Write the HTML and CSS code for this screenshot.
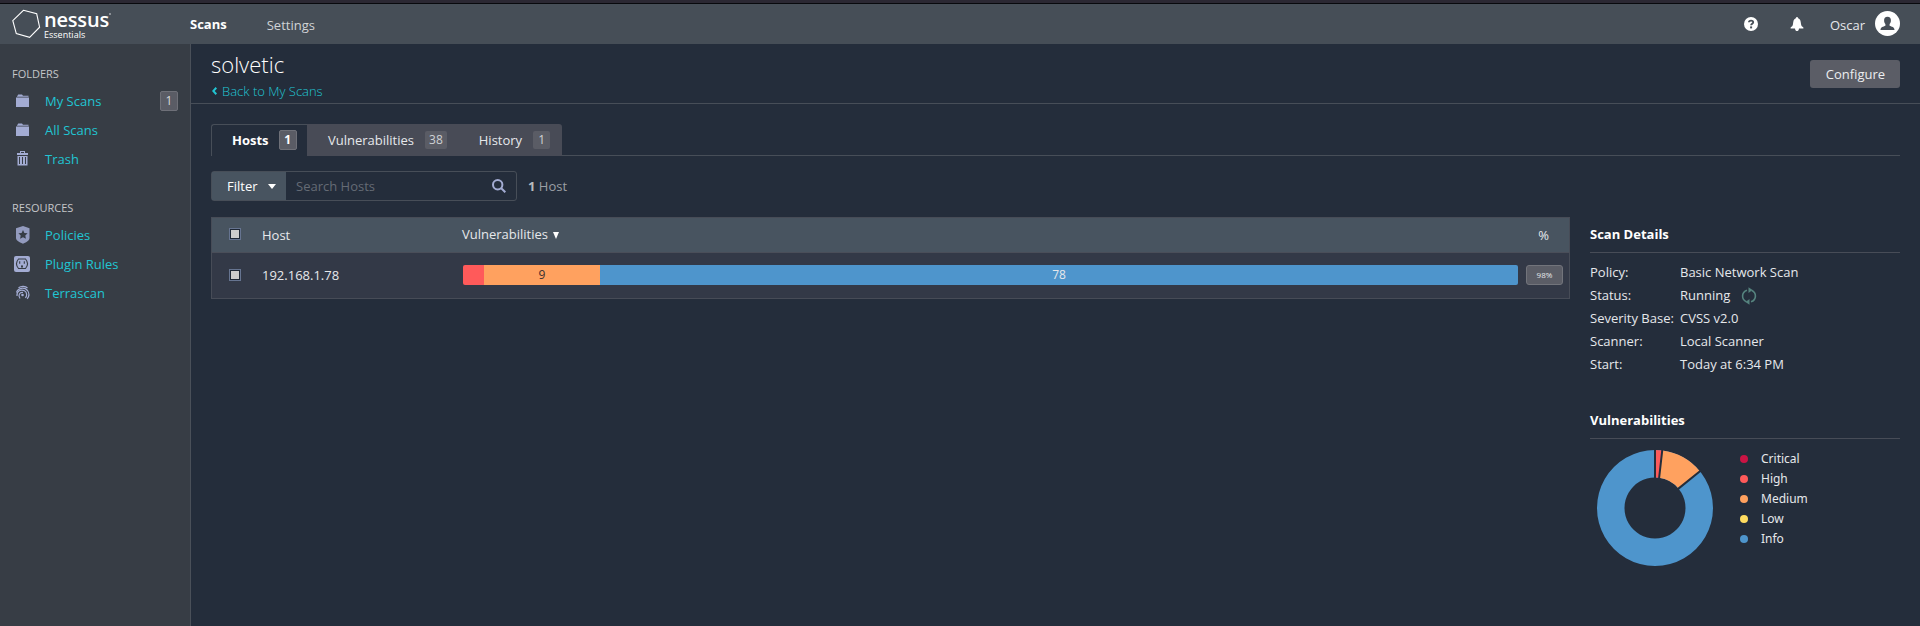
FILE: index.html
```html
<!DOCTYPE html>
<html lang="en">
<head>
<meta charset="utf-8">
<title>Nessus Essentials / solvetic</title>
<link rel="stylesheet" href="styles.css">
</head>
<body>
<header class="topbar">
  <div class="logo">
    <svg class="logo-mark" width="30" height="30" viewBox="0 0 30 30"><path d="M11.400 1.300 24.700 4.800 27.600 18.200 17.600 28.300 4.300 24.600.8 11.600Z"/></svg>
    <div class="logo-text"><span class="logo-name">nessus<i class="logo-dot"></i></span><span class="logo-sub">Essentials</span></div>
  </div>
  <nav class="topnav"><a class="nav-active">Scans</a><a class="nav-item">Settings</a></nav>
  <div class="account">
    <svg class="help" width="14" height="14" viewBox="0 0 14 14"><circle cx="7" cy="7" r="7" fill="#fff"/><path d="M4.900 5.300C5 3.200 9.200 3 9.200 5.200c0 1.500-2.100 1.500-2.100 3.100" fill="none" stroke="#464e57" stroke-width="1.800"/><rect x="6.100" y="9.400" width="2" height="2" fill="#464e57"/></svg>
    <svg class="bell" width="14" height="14" viewBox="0 0 14 14"><path d="M7 0C8 0 8 1 8.200 1.300 10.600 2.200 10.700 4.500 11 7c.2 2 1.200 2.600 2.400 3.500v.9H9C8.800 13.200 8 14 7 14s-1.800-.8-2-2.600H.6v-.9C1.800 9.600 2.800 9 3 7c.3-2.500.4-4.800 2.800-5.700C6 1 6 0 7 0z" fill="#fff"/></svg>
    <span class="user">Oscar</span>
    <svg class="avatar" width="25" height="25" viewBox="0 0 25 25"><circle cx="12.500" cy="12.500" r="12.500" fill="#fff"/><path d="M12.500 5.800c2.300 0 3.600 1.500 3.400 3.900-.1 1.700-.7 2.600-1.300 3.400v1.600c2 1 4.900 1.200 4.900 4.300H5.500c0-3.100 2.900-3.300 4.900-4.300v-1.600c-.6-.8-1.200-1.700-1.300-3.400-.2-2.400 1.100-3.900 3.400-3.900z" fill="#464e57"/></svg>
  </div>
</header>
<div class="body">
  <aside class="sidebar">
    <h4 class="side-title">FOLDERS</h4>
    <a class="side-link"><svg class="side-icon" width="18" height="18" viewBox="0 0 18 18"><path d="M3 4.500 4.200 2.500H8l1 1.200h5.500v1H3zM2 5.500h13V15H2z"/></svg>My Scans<span class="count side-count">1</span></a>
    <a class="side-link"><svg class="side-icon" width="18" height="18" viewBox="0 0 18 18"><path d="M3 4.500 4.200 2.500H8l1 1.200h5.500v1H3zM2 5.500h13V15H2z"/></svg>All Scans</a>
    <a class="side-link"><svg class="side-icon" width="18" height="18" viewBox="0 0 18 18"><path fill-rule="evenodd" d="M3 3h3V1h5v2h3v2H3zM7 2v1h3V2zM3.500 6h10v9.500h-10zM5 7v7h1V7zm3 0v7h1V7zm3 0v7h1V7z"/></svg>Trash</a>
    <h4 class="side-title side-title-second">RESOURCES</h4>
    <a class="side-link"><svg class="side-icon" width="18" height="18" viewBox="0 0 18 18"><path d="M9 0 15.500 2.300V12c0 3-4 4.500-6.500 5.800C6.500 16.500 2 15 2 12V2.300z" opacity=".85"/><path class="cut" d="m9 4 1.400 2.900 3.200.4-2.300 2.200.6 3.200L9 11.200l-2.900 1.500.6-3.200-2.300-2.200 3.200-.4z"/></svg>Policies</a>
    <a class="side-link"><svg class="side-icon" width="18" height="18" viewBox="0 0 18 18"><rect x="0" y="1" width="16" height="16" rx="2"/><path class="line" d="M4.500 4h7c2.600 3 2.600 6.500 0 9.500h-7c-2.600-3-2.600-6.500 0-9.500zM5.700 6.200v2.600M10.300 6.200v2.600"/><path class="cut" d="M7 12.500v-1.200c0-1.400 2-1.400 2 0v1.200z"/></svg>Plugin Rules</a>
    <a class="side-link"><svg class="side-icon" width="18" height="18" viewBox="0 0 18 18"><g class="arc"><path d="M4.500 3.800C7.500 1.500 11.500 2 13.500 4"/><path d="M2.500 8.500C4 3.500 10.500 3 13.500 6.500c2 2.700 1.500 6-.3 8.300"/><path d="M3 12C2.500 7 7 5 10.500 6.800c3 1.800 2.500 5.500.8 7"/><path d="M6 14.500C3.500 11 6 8 9 8.500"/></g><circle cx="8.500" cy="11" r="1.300"/></svg>Terrascan</a>
  </aside>
  <main class="main">
    <div class="page-head">
      <div><h1 class="title">solvetic</h1>
      <a class="back"><svg width="5" height="8" viewBox="0 0 5 8"><path d="M4.300.8 1.300 4l3 3.200"/></svg>Back to My Scans</a></div>
      <button class="configure">Configure</button>
    </div>
    <div class="content">
      <div class="tabs">
        <div class="tab tab-active">Hosts<span class="count">1</span></div>
        <div class="tab-group"><div class="tab tab-vuln">Vulnerabilities<span class="tab-count">38</span></div><div class="tab tab-history">History<span class="tab-count">1</span></div></div>
      </div>
      <div class="filters">
        <div class="search"><div class="filter">Filter<i class="caret"></i></div><span class="placeholder">Search Hosts</span><svg class="glass" width="14" height="14" viewBox="0 0 14 14"><circle cx="5.700" cy="5.700" r="4.700"/><path d="m9 9 4.300 4.300"/></svg></div>
        <span class="total"><b>1</b> Host</span>
      </div>
      <div class="columns">
        <div class="table">
          <div class="row row-head"><i class="check"></i><span class="cell-host">Host</span><span class="cell-vuln">Vulnerabilities <i class="sort"></i></span><span class="cell-pct">%</span></div>
          <div class="row row-item"><i class="check"></i><span class="cell-host">192.168.1.78</span><div class="bar"><span class="seg high"></span><span class="seg medium">9</span><span class="seg info">78</span></div><span class="pct">98%</span></div>
        </div>
        <section class="details">
          <h2 class="section-title">Scan Details</h2>
          <dl class="facts">
            <dt>Policy:</dt><dd>Basic Network Scan</dd>
            <dt>Status:</dt><dd class="status">Running<svg width="16" height="18" viewBox="0 0 16 18"><path class="ring" d="M5.500 14.800C.2 12.500.2 5.200 6 3.200M10.500 3.200c5.300 2.300 5.300 9.600-.5 11.600"/><path class="tip" d="M7.500.3 11.500 3 7.500 6zM8.500 17.700 4.500 15l4-3z"/></svg></dd>
            <dt>Severity Base:</dt><dd>CVSS v2.0</dd>
            <dt>Scanner:</dt><dd>Local Scanner</dd>
            <dt>Start:</dt><dd>Today at 6:34 PM</dd>
          </dl>
          <h2 class="section-title">Vulnerabilities</h2>
          <div class="chart">
            <svg class="donut" width="118" height="118" viewBox="-59 -59 118 118">
              <path d="M0-58A58 58 0 1 1-.01-58V-30.500A30.500 30.500 0 1 0 0-30.500Z" fill="#4e95cc"/>
              <path d="M0-58A58 58 0 0 1 8.200-57.400L4.300-30.200A30.500 30.500 0 0 0 0-30.500Z" fill="#ff5a5a"/>
              <path d="M7.300-57.500A58 58 0 0 1 45-36.600L23.700-19.200A30.500 30.500 0 0 0 3.900-30.200Z" fill="#ffa15f"/>
              <path d="M0-29V-60M4-29 7.500-60M22.500-18.600 46.500-38" stroke="#242d3b" stroke-width="2"/>
            </svg>
            <ul class="legend"><li><i class="dot critical"></i>Critical</li><li><i class="dot high"></i>High</li><li><i class="dot medium"></i>Medium</li><li><i class="dot low"></i>Low</li><li><i class="dot info"></i>Info</li></ul>
          </div>
        </section>
      </div>
    </div>
  </main>
</div>
</body>
</html>
```
FILE: styles.css
```css
* { box-sizing: border-box; }
body { margin: 0; height: 626px; overflow: hidden; background: #242d3b; color: #e6e8eb; font: 13px/20px "Open Sans", "Noto Sans", sans-serif; display: flex; flex-direction: column; }
h1, h2, h4, dl, dd, ul { margin: 0; padding: 0; font-weight: 400; }
svg { display: block; flex: none; }

.topbar { height: 44px; flex: none; border-top: 3px solid #2b2833; background: linear-gradient(#08090d 1px, #464e57 1px); display: flex; align-items: flex-start; padding: 0 20px 0 12px; }
.logo { display: flex; width: 178px; padding-top: 6px; }
.logo-mark path { fill: none; stroke: #fff; stroke-width: 1.1; }
.logo-text { display: flex; flex-direction: column; margin-left: 2px; }
.logo-name { font-size: 20px; line-height: 21px; font-weight: 600; color: #fff; letter-spacing: -.2px; display: flex; }
.logo-dot { width: 2px; height: 2px; margin-top: 4px; background: #8b9096; }
.logo-sub { font-size: 9px; line-height: 10px; color: #fff; }
.topnav { display: flex; gap: 40px; flex: 1; padding-top: 11px; }
.nav-active { font-weight: 700; color: #fff; }
.nav-item { padding-top: 1px; color: #d0d3d6; }
.account { display: flex; }
.help { margin: 14px 32px 0 0; }
.bell { margin: 14px 26px 0 0; }
.user { padding-top: 12px; margin-right: 10px; }
.avatar { margin-top: 8px; }

.body { flex: 1; display: flex; min-height: 0; }
.sidebar { width: 191px; flex: none; background: #373d45; border-right: 1px solid #4a5059; padding: 20px 12px 0 12px; }
.side-title { font-size: 11px; line-height: 20px; height: 22px; color: #c4c6c9; }
.side-title-second { margin-top: 25px; height: 22px; }
.side-link { display: flex; align-items: center; height: 29px; color: #21c5d3; }
.side-icon { margin: 0 13px 0 2px; fill: #a3acd3; }
.side-icon .cut { fill: #373d45; }
.side-icon .line { fill: none; stroke: #373d45; stroke-width: 1.1; }
.side-icon .arc { fill: none; stroke: #a3acd3; stroke-width: 1.2; }
.count { width: 18px; height: 20px; border: 1px solid #6e7078; border-radius: 2px; background: #5a5c65; color: #fff; font-size: 12px; line-height: 18px; text-align: center; }
.side-count { margin-left: auto; color: #d8d9dc; }

.main { flex: 1; min-width: 0; }
.page-head { height: 60px; border-bottom: 1px solid #474e58; padding: 0 20px; display: flex; justify-content: space-between; }
.title { font-size: 22px; line-height: 30px; font-weight: 300; padding-top: 5px; margin-bottom: 2px; color: #fff; }
.back { display: flex; align-items: center; gap: 5px; padding-left: 1px; font-weight: 300; color: #21c5d3; }
.back svg { fill: none; stroke: #21c5d3; stroke-width: 2; }
.configure { width: 90px; height: 28px; margin-top: 16px; padding: 0 0 0 1px; border: 0; border-radius: 3px; background: #5b5d66; color: #eceef0; font: inherit; }
.content { padding: 20px 20px 0; }
.tabs { display: flex; height: 32px; background: linear-gradient(#474e58, #474e58) bottom / 100% 1px no-repeat; }
.tab { display: flex; align-items: center; }
.tab-active { width: 96px; border: 1px solid #474e58; border-width: 1px 0 0 1px; border-radius: 3px 0 0; background: #242d3b; padding: 0 0 1px 20px; gap: 10px; font-weight: 700; color: #fff; }
.tab-group { display: flex; background: #484b56; width: 255px; border-radius: 0 3px 0 0; padding-left: 21px; justify-content: space-between; padding-right: 12px; }
.tab-count { height: 18px; padding: 0 4px; margin-left: 11px; border-radius: 2px; background: #5a5c65; color: #cfd1d4; font-size: 12px; line-height: 18px; }
.tab-history .tab-count { padding: 0 5px; }
.filters { display: flex; align-items: center; margin-top: 15px; height: 30px; }
.search { width: 306px; height: 30px; border: 1px solid #474e58; border-radius: 3px; display: flex; align-items: center; }
.filter { width: 74px; height: 28px; line-height: 28px; padding-left: 15px; background: #485460; color: #fff; display: flex; align-items: center; }
.caret { margin-left: 10px; border: 4.5px solid transparent; border-top: 5px solid #fff; border-bottom: 0; }
.placeholder { margin-left: 10px; flex: 1; color: #656b75; }
.glass { margin-right: 10px; fill: none; stroke: #a3acd3; stroke-width: 2; }
.total { margin-left: 11px; color: #9b9fa5; }
.total b { color: #b9bbbe; }
.columns { display: flex; justify-content: space-between; margin-top: 16px; }
.table { width: 1359px; height: 82px; border: 1px solid #474c57; }
.row { display: flex; align-items: center; padding-left: 17px; }
.row-head { height: 35px; background: #485460; border-bottom: 1px solid #4a4e59; }
.row-item { height: 45px; padding-bottom: 1px; background: #333947; }
.check { width: 12px; height: 12px; margin-right: 21px; border: 1px solid #667490; background: #ccc content-box; padding: 1px; box-shadow: inset 0 0 0 1px #1f2836; }
.row-head .check { margin-top: -2px; }
.cell-host { width: 200px; }
.row-item .cell-host { width: 201px; }
.cell-vuln { flex: 1; padding-bottom: 2px; }
.sort { display: inline-block; margin-left: 2px; border: 3.5px solid transparent; border-top: 7px solid #fff; border-bottom: 0; }
.cell-pct { margin-right: 20px; }
.bar { display: flex; width: 1055px; height: 20px; border-radius: 2px; overflow: hidden; font-size: 12px; text-align: center; }
.seg.high { width: 21px; }
.seg.medium { width: 116px; color: #3a3030; }
.seg.info { flex: 1; }
.high { background: #ff5a5a; }
.medium { background: #ffa15f; }
.info { background: #4e95cc; }
.low { background: #ffdc60; }
.critical { background: #ca1444; }
.pct { width: 37px; height: 20px; margin-left: 8px; border: 1px solid #72747b; border-radius: 3px; background: #5b5d66; font-size: 8px; line-height: 18px; text-align: center; }

.details { width: 310px; }
.section-title { height: 36px; padding-top: 7px; border-bottom: 1px solid #474c57; font-size: 13px; font-weight: 700; color: #fff; }
.facts { display: grid; grid-template-columns: 90px 1fr; grid-auto-rows: 23px; line-height: 23px; padding: 8px 0 27px; white-space: nowrap; }
.status { display: flex; gap: 11px; align-items: center; }
.status .ring { fill: none; stroke: #55837e; stroke-width: 1.6; }
.status .tip { fill: #55837e; }
.chart { display: flex; padding: 11px 0 0 6px; }
.donut { margin-top: -1px; }
.legend { list-style: none; margin: -1px 0 0 26px; font-family: "Noto Sans", "Open Sans", sans-serif; font-size: 12px; }
.legend li { display: flex; align-items: center; height: 20px; }
.dot { width: 8px; height: 8px; border-radius: 50%; margin-right: 13px; }
```
